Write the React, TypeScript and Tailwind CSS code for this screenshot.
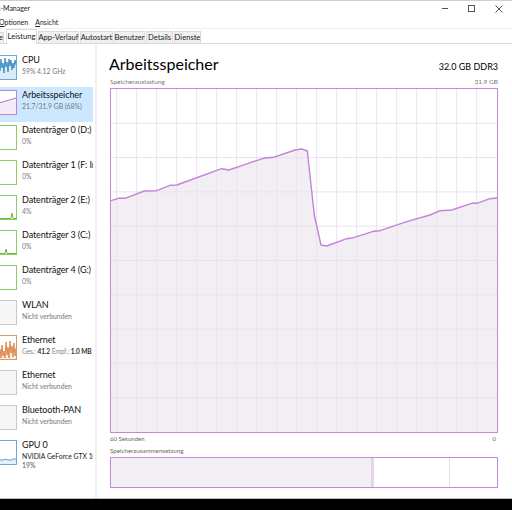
import React from "react";

const items = [
  { title: "CPU", sub: "59% 4.12 GHz", kind: "cpu" },
  { title: "Arbeitsspeicher", sub: "21.7/31.9 GB (68%)", kind: "mem", active: true },
  { title: "Datenträger 0 (D:)", sub: "0%", kind: "disk" },
  { title: "Datenträger 1 (F: Intern)", sub: "0%", kind: "disk" },
  { title: "Datenträger 2 (E:)", sub: "4%", kind: "disk2" },
  { title: "Datenträger 3 (C:)", sub: "0%", kind: "disk3" },
  { title: "Datenträger 4 (G:)", sub: "0%", kind: "disk" },
  { title: "WLAN", sub: "Nicht verbunden", kind: "off" },
  { title: "Ethernet", sub: "eth", kind: "eth" },
  { title: "Ethernet", sub: "Nicht verbunden", kind: "off" },
  { title: "Bluetooth-PAN", sub: "Nicht verbunden", kind: "off" },
  { title: "GPU 0", sub: "NVIDIA GeForce GTX 1070", sub2: "19%", kind: "gpu" },
];

const tabs: [string, string][] = [
  ["Leistung", "w-[31px]"],
  ["App-Verlauf", "w-[41px]"],
  ["Autostart", "w-[33px]"],
  ["Benutzer", "w-[31px]"],
  ["Details", "w-[27px]"],
  ["Dienste", "w-[27px]"],
];

const cpuY = [5, 15, 3, 12, 7, 17, 2, 11, 6, 16, 3, 10, 4, 14, 7, 12, 4, 9];
const ethY = [21, 13, 22, 9, 20, 15, 22, 6, 19, 11, 22, 5, 17, 10, 21, 7, 20, 12];

function spikes(ys: number[]) {
  return ys.map((y, i) => `${i},${y}`).join(" ");
}

function Thumb({ kind }: { kind: string }) {
  const border =
    kind === "cpu" || kind === "gpu"
      ? "border-[#6aaad6]"
      : kind === "mem"
      ? "border-[#c083d6]"
      : kind === "eth"
      ? "border-[#d39a6a]"
      : kind === "off"
      ? "border-[#c9c9c9]"
      : "border-[#8fcb66]";
  return (
    <div className={`-ml-[2px] mt-[3px] h-[25px] w-[19px] shrink-0 overflow-hidden border bg-white ${border}`}>
      <svg width="17" height="23" className="block">
        {kind === "cpu" && (
          <>
            <polygon points={`0,23 ${spikes(cpuY)} 17,23`} fill="#dcebf6" />
            <polyline points={spikes(cpuY)} fill="none" stroke="#3f8dc6" strokeWidth="1" />
          </>
        )}
        {kind === "mem" && (
          <>
            <polygon points="0,23 0,12 17,7 17,23" fill="#f3ecf6" />
            <polyline points="0,12 17,7" fill="none" stroke="#b46fcf" strokeWidth="1" />
          </>
        )}
        {kind === "eth" && (
          <>
            <polygon points={`0,23 ${spikes(ethY)} 17,23`} fill="#fbeee2" />
            <polyline points={spikes(ethY)} fill="none" stroke="#dc8a4e" strokeWidth="1" />
          </>
        )}
        {kind === "off" && <rect width="17" height="23" fill="#f7f7f7" />}
        {kind === "disk2" && (
          <polyline points="0,22.5 12,22.5 13,17 14,22.5 17,22.5" fill="none" stroke="#6fbb3e" strokeWidth="1" />
        )}
        {kind === "disk3" && (
          <polyline points="0,22.5 6,22.5 7,18 8,22.5 17,22.5" fill="none" stroke="#6fbb3e" strokeWidth="1" />
        )}
        {kind === "gpu" && (
          <>
            <polygon points="0,23 0,19 5,19 6,18 9,19 13,19 14,18 17,18 17,23" fill="#e6f1f9" />
            <polyline points="0,19 5,19 6,18 9,19 13,19 14,18 17,18" fill="none" stroke="#5aa0d0" strokeWidth="1" />
          </>
        )}
      </svg>
    </div>
  );
}

function Sidebar() {
  return (
    <div className="flex w-[95px] shrink-0 flex-col pt-[8px] pr-[2px]">
      {items.map((it, i) => (
        <div key={i} className={`flex h-[35px] gap-[5px] ${it.active ? "bg-[#cce8ff]" : ""}`}>
          <Thumb kind={it.kind} />
          <div className="mt-[1px] w-[71px] overflow-hidden whitespace-nowrap">
            <div className="h-[13px] text-[9px] leading-[13px] tracking-[-0.1px] text-[#111]">{it.title}</div>
            {it.sub === "eth" ? (
              <div className="text-[6.6px] leading-[10px] tracking-[-0.1px] text-[#888]">
                Ges.: <span className="font-bold text-[#333]">41.2</span> Empf.: <span className="font-bold text-[#333]">1.0 MB</span>
              </div>
            ) : (
              <div className={`text-[6.8px] leading-[10px] ${it.sub2 ? "text-[#222]" : "text-[#777]"}`}>{it.sub}</div>
            )}
            {it.sub2 && <div className="text-[6.8px] leading-[9px] text-[#555]">{it.sub2}</div>}
          </div>
        </div>
      ))}
    </div>
  );
}

const W = 386;
const H = 343;
const pts: [number, number][] = [
  [0, 111.7], [7.3, 109.3], [14, 109.3], [33.3, 102], [45.7, 101.7], [59, 96.3], [65.7, 96],
  [110.7, 79.7], [118, 81], [137.3, 74.3], [152.3, 69.3], [162.3, 68.3], [184, 61], [190.7, 60],
  [196.3, 62], [203.3, 126], [210, 156], [215.7, 157], [235.7, 149.7], [242.3, 148.7],
  [262.3, 142.3], [269, 141.7], [295.7, 132.7], [319, 126], [329, 121.7], [340.7, 121],
  [360.7, 114.3], [365.7, 114.3], [379, 109.7], [386, 109],
];

function MemChart() {
  const line = pts.map((p) => p.join(",")).join(" ");
  const vx = Array.from({ length: 19 }, (_, k) => 5.7 + 20 * k);
  const hy = Array.from({ length: 9 }, (_, k) => 34.3 * (k + 1));
  return (
    <svg width={W} height={H} className="block">
      <polygon points={`0,${H} ${line} ${W},${H}`} fill="#f2eff4" />
      {vx.map((x) => (
        <line key={x} x1={x} x2={x} y1={0} y2={H} stroke="#ebe1f0" strokeWidth="1" />
      ))}
      {hy.map((y) => (
        <line key={y} x1={0} x2={W} y1={y} y2={y} stroke="#ebe1f0" strokeWidth="1" />
      ))}
      <polyline points={line} fill="none" stroke="#c482da" strokeWidth="1.4" strokeLinejoin="round" />
    </svg>
  );
}

export default function App() {
  return (
    <div className="relative flex h-[510px] w-[512px] flex-col overflow-hidden bg-white font-['Lato','Liberation_Sans',sans-serif] text-black">
      {/* Titelleiste */}
      <div className="flex h-[16px] items-center border-t border-[#cfcfcf]">
        <span className="-ml-[3px] text-[7px] text-[#222]">k-Manager</span>
        <div className="ml-auto flex h-full">
          <div className="flex w-[27px] items-center justify-center">
            <div className="h-px w-[6px] bg-[#555]" />
          </div>
          <div className="flex w-[27px] items-center justify-center">
            <div className="h-[7px] w-[7px] border border-[#555]" />
          </div>
          <div className="flex w-[27px] items-center justify-center">
            <svg width="8" height="8">
              <path d="M0.5 0.5 L7.5 7.5 M7.5 0.5 L0.5 7.5" stroke="#555" strokeWidth="1" />
            </svg>
          </div>
        </div>
      </div>

      {/* Menü */}
      <div className="flex h-[13px] items-center gap-[7px] border-b border-[#f0f0f0] text-[7px] text-[#222]">
        <span className="-ml-[1px]">
          <span className="underline">O</span>ptionen
        </span>
        <span>
          <span className="underline">A</span>nsicht
        </span>
      </div>

      {/* Tabs */}
      <div className="flex h-[15px] items-end whitespace-nowrap border-b border-[#dadada] text-[7.6px] text-[#222]">
        <div className="mb-[-1px] flex h-[12px] w-[4px] shrink-0 items-center justify-end overflow-hidden border-y border-r border-[#dadada] bg-[#f0f0f0]">
          <span>e</span>
        </div>
        {tabs.map(([t, w], i) => (
          <div
            key={t}
            className={
              i === 0
                ? `mb-[-1px] ml-[2px] flex h-[15px] shrink-0 items-center justify-center border-x border-t border-[#dadada] bg-white ${w}`
                : `ml-[1px] flex h-[12px] shrink-0 items-center justify-center border-x border-t border-[#dadada] bg-[#f0f0f0] ${w}`
            }
          >
            {t}
          </div>
        ))}
      </div>

      {/* Inhalt */}
      <div className="flex flex-1">
        <Sidebar />
        <div className="w-[2px] bg-[#f0f0f0]" />
        <div className="flex flex-1 flex-col pt-[10px] pl-[13px] pr-[14px]">
          <div className="flex h-[20px] items-baseline justify-between">
            <span className="-ml-[1px] text-[16px] leading-[20px]">Arbeitsspeicher</span>
            <span className="text-[9px]">32.0 GB DDR3</span>
          </div>
          <div className="mt-[3px] flex h-[10px] items-center justify-between text-[6.5px] text-[#777]">
            <span>Speicherauslastung</span>
            <span>31.9 GB</span>
          </div>
          <div className="mt-[1px] w-[388px] border border-[#c585da]">
            <MemChart />
          </div>
          <div className="flex h-[10px] items-center justify-between text-[6px] text-[#666]">
            <span>60 Sekunden</span>
            <span className="mr-[2px]">0</span>
          </div>
          <div className="mt-[2px] flex h-[11px] items-center text-[6.2px] text-[#666]">Speicherzusammensetzung</div>
          <div className="mt-[1px] flex h-[31px] w-[388px] border border-[#c585da]">
            <div className="w-[260px] bg-[#f2eff4]" />
            <div className="w-[3px] bg-[#e2d6e8]" />
            <div className="w-[76px] border-r border-[#e6d8ee] bg-white" />
            <div className="flex-1 bg-white" />
          </div>
        </div>
      </div>

      <div className="h-px bg-[#bdbdbd]" />
      <div className="h-[11px] bg-black" />
    </div>
  );
}
